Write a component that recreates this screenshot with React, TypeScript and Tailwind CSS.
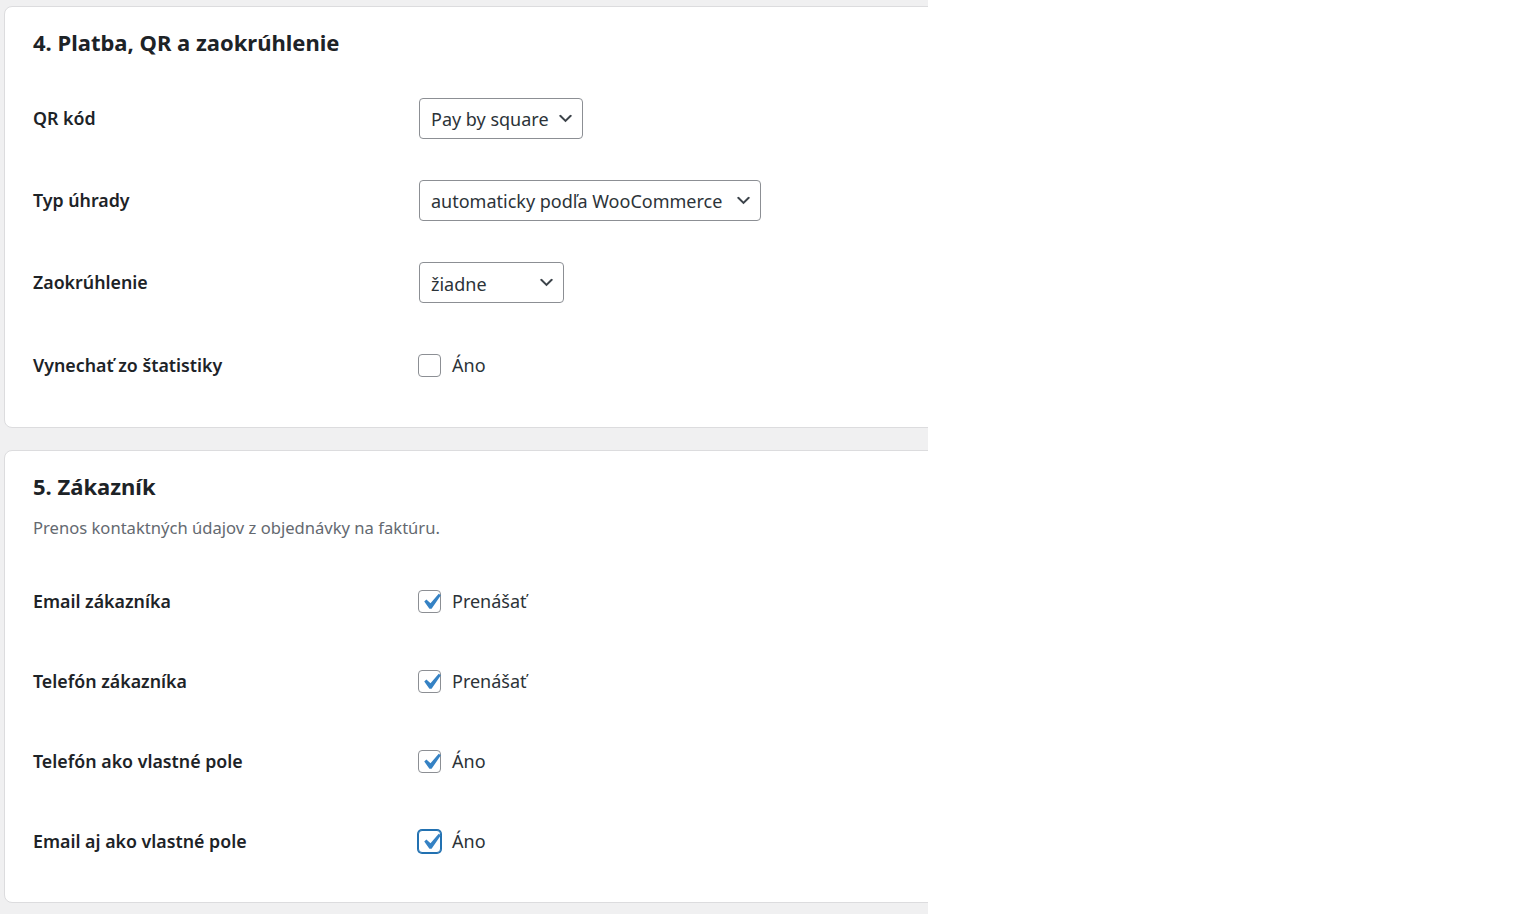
import React from 'react';

const font = { fontFamily: '"Noto Sans", "Open Sans", sans-serif' };

const Chevron = () => (
  <svg width="19" height="19" viewBox="0 0 20 20" className="shrink-0">
    <path d="M5 6l5 5 5-5 2 1-7 7-7-7z" fill="#3c434a" />
  </svg>
);

const Select = ({ value, width }: { value: string; width: string }) => (
  <div
    className={`ml-[1px] flex items-center justify-between h-[41px] pl-[11px] pr-[7px] border border-[#8c8f94] rounded-[4px] bg-white text-[18px] text-[#2c3338] ${width}`}
  >
    <span className="whitespace-nowrap pt-[3px]">{value}</span>
    <Chevron />
  </div>
);

const Checkbox = ({ checked, focused, label }: { checked?: boolean; focused?: boolean; label: string }) => (
  <div className="flex items-center gap-[11px]">
    <div
      className={`flex items-center justify-center w-[23px] h-[23px] rounded-[4px] bg-white overflow-visible ${
        focused ? 'border border-[#2271b1] ring-1 ring-[#2271b1]' : 'border border-[#8c8f94]'
      }`}
    >
      {checked && (
        <svg width="32" height="32" viewBox="0 0 20 20" className="shrink-0 -mr-[2px] mt-[1px]">
          <path d="M14.83 4.89l1.34.94-5.81 8.38H9.02L5.78 9.67l1.34-1.25 2.57 2.4z" fill="#3582c4" />
        </svg>
      )}
    </div>
    <span className="text-[18px] text-[#2c3338] pt-[1px]">{label}</span>
  </div>
);

const Row = ({ label, h, children }: { label: string; h: string; children: React.ReactNode }) => (
  <div className={`flex items-center ${h}`}>
    <div className="w-[385px] shrink-0 text-[17.8px] font-semibold text-[#1d2327]">{label}</div>
    <div>{children}</div>
  </div>
);

export default function App() {
  return (
    <div className="min-h-screen bg-white" style={font}>
      <div className="w-[928px] h-[914px] overflow-hidden bg-[#f0f0f1] pt-[6px] pl-[4px]">
        <div className="mr-[-20px] bg-white border border-[#dcdcde] rounded-[8px] px-[28px] pt-[20px] pb-[21px]">
          <h2 className="h-[30px] leading-[30px] text-[22px] font-bold text-[#1d2327]">4. Platba, QR a zaokrúhlenie</h2>
          <div className="mt-[20px]">
            <Row label="QR kód" h="h-[82px]">
              <Select value="Pay by square" width="w-[164px]" />
            </Row>
            <Row label="Typ úhrady" h="h-[82px]">
              <Select value="automaticky podľa WooCommerce" width="w-[342px]" />
            </Row>
            <Row label="Zaokrúhlenie" h="h-[83px]">
              <Select value="žiadne" width="w-[145px]" />
            </Row>
            <Row label="Vynechať zo štatistiky" h="h-[82px]">
              <Checkbox label="Áno" />
            </Row>
          </div>
        </div>

        <div className="mt-[22px] mr-[-20px] bg-white border border-[#dcdcde] rounded-[8px] px-[28px] pt-[20px] pb-[21px]">
          <h2 className="h-[30px] leading-[30px] text-[22px] font-bold text-[#1d2327]">5. Zákazník</h2>
          <p className="mt-[15px] h-[24px] leading-[24px] text-[16.6px] text-[#646970]">
            Prenos kontaktných údajov z objednávky na faktúru.
          </p>
          <div className="mt-[21px]">
            <Row label="Email zákazníka" h="h-[80px]">
              <Checkbox checked label="Prenášať" />
            </Row>
            <Row label="Telefón zákazníka" h="h-[80px]">
              <Checkbox checked label="Prenášať" />
            </Row>
            <Row label="Telefón ako vlastné pole" h="h-[80px]">
              <Checkbox checked label="Áno" />
            </Row>
            <Row label="Email aj ako vlastné pole" h="h-[80px]">
              <Checkbox checked focused label="Áno" />
            </Row>
          </div>
        </div>
      </div>
    </div>
  );
}
